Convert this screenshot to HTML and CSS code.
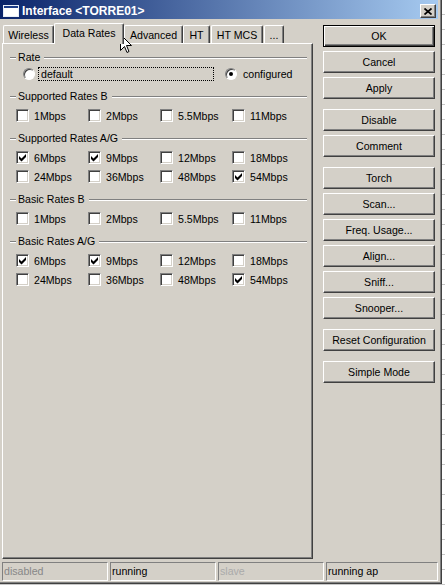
FILE: index.html
```html
<!DOCTYPE html>
<html>
<head>
<meta charset="utf-8">
<link rel="stylesheet" href="styles.css">
</head>
<body>
<div class="window">
  <div class="titlebar">
    <svg class="appicon" width="16" height="12" viewBox="0 0 16 12">
      <rect x="0.5" y="0.5" width="15" height="11" fill="#fff" stroke="#e8eef8"/>
      <rect x="1" y="1" width="14" height="2" fill="#1c3c88"/>
    </svg>
    <span class="title">Interface &lt;TORRE01&gt;</span>
    <span class="closebtn">
      <svg width="8" height="7" viewBox="0 0 8 7"><path d="M0.5 0.5 L7.5 6.5 M7.5 0.5 L0.5 6.5" stroke="#000" stroke-width="1.7" fill="none"/></svg>
    </span>
  </div>
  <div class="main">
    <div class="left">
      <div class="tabs">
        <div class="tab w-wireless">Wireless</div>
        <div class="tab active w-rates">Data Rates</div>
        <div class="tab w-adv">Advanced</div>
        <div class="tab w-ht">HT</div>
        <div class="tab w-htmcs">HT MCS</div>
        <div class="tab w-more">...</div>
      </div>
      <div class="panel">
        <div class="group group-rate">
          <div class="legend"><span class="dash"></span><span class="ltext">Rate</span><span class="rule"></span></div>
          <div class="radiorow">
            <span class="radio"></span>
            <span class="focus">default</span>
            <span class="radio checked r2"></span>
            <span class="rlabel">configured</span>
          </div>
        </div>
        <div class="group">
          <div class="legend"><span class="dash"></span><span class="ltext">Supported Rates B</span><span class="rule"></span></div>
          <div class="rows">
            <div class="cbitem"><span class="cb"></span>1Mbps</div>
            <div class="cbitem"><span class="cb"></span>2Mbps</div>
            <div class="cbitem"><span class="cb"></span>5.5Mbps</div>
            <div class="cbitem"><span class="cb"></span>11Mbps</div>
          </div>
        </div>
        <div class="group">
          <div class="legend"><span class="dash"></span><span class="ltext">Supported Rates A/G</span><span class="rule"></span></div>
          <div class="rows">
            <div class="cbitem"><span class="cb"><svg width="11" height="11" viewBox="0 0 11 11"><polygon points="2,4 4.5,6.5 9,2 9,5 4.5,9.5 2,7" fill="#000"/></svg></span>6Mbps</div>
            <div class="cbitem"><span class="cb"><svg width="11" height="11" viewBox="0 0 11 11"><polygon points="2,4 4.5,6.5 9,2 9,5 4.5,9.5 2,7" fill="#000"/></svg></span>9Mbps</div>
            <div class="cbitem"><span class="cb"></span>12Mbps</div>
            <div class="cbitem"><span class="cb"></span>18Mbps</div>
            <div class="cbitem"><span class="cb"></span>24Mbps</div>
            <div class="cbitem"><span class="cb"></span>36Mbps</div>
            <div class="cbitem"><span class="cb"></span>48Mbps</div>
            <div class="cbitem"><span class="cb"><svg width="11" height="11" viewBox="0 0 11 11"><polygon points="2,4 4.5,6.5 9,2 9,5 4.5,9.5 2,7" fill="#000"/></svg></span>54Mbps</div>
          </div>
        </div>
        <div class="group">
          <div class="legend"><span class="dash"></span><span class="ltext">Basic Rates B</span><span class="rule"></span></div>
          <div class="rows">
            <div class="cbitem"><span class="cb"></span>1Mbps</div>
            <div class="cbitem"><span class="cb"></span>2Mbps</div>
            <div class="cbitem"><span class="cb"></span>5.5Mbps</div>
            <div class="cbitem"><span class="cb"></span>11Mbps</div>
          </div>
        </div>
        <div class="group">
          <div class="legend"><span class="dash"></span><span class="ltext">Basic Rates A/G</span><span class="rule"></span></div>
          <div class="rows">
            <div class="cbitem"><span class="cb"><svg width="11" height="11" viewBox="0 0 11 11"><polygon points="2,4 4.5,6.5 9,2 9,5 4.5,9.5 2,7" fill="#000"/></svg></span>6Mbps</div>
            <div class="cbitem"><span class="cb"><svg width="11" height="11" viewBox="0 0 11 11"><polygon points="2,4 4.5,6.5 9,2 9,5 4.5,9.5 2,7" fill="#000"/></svg></span>9Mbps</div>
            <div class="cbitem"><span class="cb"></span>12Mbps</div>
            <div class="cbitem"><span class="cb"></span>18Mbps</div>
            <div class="cbitem"><span class="cb"></span>24Mbps</div>
            <div class="cbitem"><span class="cb"></span>36Mbps</div>
            <div class="cbitem"><span class="cb"></span>48Mbps</div>
            <div class="cbitem"><span class="cb"><svg width="11" height="11" viewBox="0 0 11 11"><polygon points="2,4 4.5,6.5 9,2 9,5 4.5,9.5 2,7" fill="#000"/></svg></span>54Mbps</div>
          </div>
        </div>
      </div>
    </div>
    <div class="right">
      <div class="btn default">OK</div>
      <div class="btn">Cancel</div>
      <div class="btn">Apply</div>
      <div class="btn sep">Disable</div>
      <div class="btn">Comment</div>
      <div class="btn sep">Torch</div>
      <div class="btn">Scan...</div>
      <div class="btn">Freq. Usage...</div>
      <div class="btn">Align...</div>
      <div class="btn">Sniff...</div>
      <div class="btn">Snooper...</div>
      <div class="btn sep">Reset Configuration</div>
      <div class="btn sep">Simple Mode</div>
    </div>
  </div>
  <div class="status">
    <div class="sp sp-a dis">disabled</div>
    <div class="sp sp-a">running</div>
    <div class="sp sp-a dis2">slave</div>
    <div class="sp sp-b">running ap</div>
  </div>
</div>
<svg class="cursor" width="12" height="20" viewBox="0 0 12 20"><path d="M0.5 0.5 V16.5 L4.5 12.5 L7 18.5 L9 17.5 L6.5 11.5 H11.5 Z" fill="#fff" stroke="#000"/></svg>
</body>
</html>
```
FILE: styles.css
```css
html, body {
  margin: 0;
  padding: 0;
}
body {
  width: 445px;
  height: 586px;
  overflow: hidden;
  background: repeating-linear-gradient(to bottom, #ffffff 0 14px, #c8c8c8 14px 15px);
  font-family: "Liberation Sans", Arial, sans-serif;
  font-size: 10.6px;
  color: #000;
  position: relative;
}
.window {
  width: 442px;
  height: 584px;
  box-sizing: border-box;
  background: #d4d0c8;
  border-right: 1px solid #404040;
  border-bottom: 1px solid #404040;
  box-shadow: inset -1px -1px #808080;
  display: flex;
  flex-direction: column;
}
.titlebar {
  height: 19px;
  width: 438px;
  flex-shrink: 0;
  background: linear-gradient(to right, #0a246a, #a6caf0);
  display: flex;
  align-items: center;
}
.appicon {
  display: block;
  align-self: flex-start;
  margin-top: 5px;
  margin-left: 3px;
}
.title {
  margin-left: 3px;
  color: #fff;
  font-weight: bold;
  font-size: 12px;
  padding-top: 2px;
  white-space: nowrap;
}
.closebtn {
  margin-left: auto;
  margin-right: 2px;
  align-self: flex-start;
  margin-top: 4px;
  width: 16px;
  height: 14px;
  box-sizing: border-box;
  background: #d4d0c8;
  border: 1px solid;
  border-color: #fff #404040 #404040 #fff;
  box-shadow: inset -1px -1px #808080;
  display: flex;
  align-items: center;
  justify-content: center;
}
.closebtn svg { display: block; }
.main {
  display: flex;
  height: 540px;
  flex-shrink: 0;
}
.left {
  margin-left: 2px;
  width: 311px;
  padding-top: 4px;
  display: flex;
  flex-direction: column;
}
.tabs {
  display: flex;
  height: 20px;
  align-items: flex-end;
  padding-left: 1px;
}
.tab {
  height: 18px;
  box-sizing: border-box;
  border-top: 1px solid #fff;
  border-left: 1px solid #fff;
  border-right: 1px solid #404040;
  box-shadow: inset -1px 0 #808080;
  border-radius: 2px 2px 0 0;
  text-align: center;
  line-height: 14px;
  padding-top: 2px;
  white-space: nowrap;
  background: #d4d0c8;
}
.tab.active {
  height: 21px;
  margin-bottom: -1px;
  padding-top: 1.5px;
  position: relative;
  z-index: 1;
}
.w-wireless { width: 51px; }
.w-rates { width: 70px; }
.w-adv { width: 59px; }
.w-ht { width: 27px; margin-right: 1px; }
.w-htmcs { width: 52px; margin-right: 1px; }
.w-more { width: 20px; }
.panel {
  height: 516px;
  box-sizing: border-box;
  border-top: 1px solid #fff;
  border-left: 1px solid #fff;
  border-right: 1px solid #404040;
  border-bottom: 1px solid #404040;
  box-shadow: inset -1px -1px #808080;
  padding: 3px 5px 0 7px;
}
.group + .group { margin-top: 3px; }
.group-rate { margin-bottom: 2px; }
.legend {
  display: flex;
  align-items: center;
  height: 20px;
}
.dash, .rule {
  height: 2px;
  box-sizing: border-box;
  border-top: 1px solid #808080;
  border-bottom: 1px solid #fff;
  margin-top: 1px;
}
.dash { width: 6px; }
.rule { flex: 1; }
.ltext {
  margin: 0 4px 0 2px;
  line-height: 14px;
  white-space: nowrap;
}
.radiorow {
  display: flex;
  align-items: center;
  height: 19px;
  margin-top: -3px;
  padding-left: 13px;
}
.radio {
  width: 12px;
  height: 12px;
  box-sizing: border-box;
  border-radius: 50%;
  background: #fff;
  border: 1px solid;
  border-color: #808080 #fff #fff #808080;
  box-shadow: inset 1px 1px #404040;
  display: flex;
  align-items: center;
  justify-content: center;
  flex-shrink: 0;
}
.radio.checked::after {
  content: "";
  width: 4px;
  height: 4px;
  border-radius: 50%;
  background: #000;
}
.focus {
  margin-left: 3px;
  width: 176px;
  height: 14px;
  box-sizing: border-box;
  border: 1px dotted #000;
  padding-left: 2px;
  line-height: 12px;
}
.r2 { margin-left: 11px; }
.rlabel { margin-left: 6px; }
.rows {
  display: grid;
  grid-template-columns: repeat(4, 72px);
  padding-left: 6px;
}
.cbitem {
  display: flex;
  align-items: center;
  height: 19px;
  white-space: nowrap;
}
.cb {
  width: 13px;
  height: 13px;
  box-sizing: border-box;
  flex-shrink: 0;
  margin-right: 5px;
  background: #fff;
  border: 1px solid;
  border-color: #808080 #fff #fff #808080;
  box-shadow: inset 1px 1px #404040, inset -1px -1px #d4d0c8;
}
.cb svg { display: block; }
.right {
  margin-left: 10px;
  width: 112px;
  padding-top: 6px;
  display: flex;
  flex-direction: column;
  gap: 4px;
}
.btn {
  height: 22px;
  box-sizing: border-box;
  border: 1px solid;
  border-color: #fff #404040 #404040 #fff;
  box-shadow: inset -1px -1px #808080;
  background: #d4d0c8;
  text-align: center;
  line-height: 20px;
  white-space: nowrap;
}
.btn.default {
  border-color: #000;
  box-shadow: inset 1px 1px #fff, inset -1px -1px #404040, inset -2px -2px #808080;
}
.btn.sep { margin-top: 6px; }
.status {
  display: flex;
  gap: 2px;
  padding-left: 2px;
  margin-top: 3px;
}
.sp {
  height: 19px;
  box-sizing: border-box;
  border: 1px solid;
  border-color: #808080 #fff #fff #808080;
  padding-left: 1px;
  line-height: 17px;
  white-space: nowrap;
}
.sp-a { width: 106px; }
.sp-b { width: 112px; }
.dis { color: #878787; }
.dis2 { color: #aaaaaa; }
.cursor {
  position: absolute;
  left: 120px;
  top: 34px;
  display: block;
}
```
